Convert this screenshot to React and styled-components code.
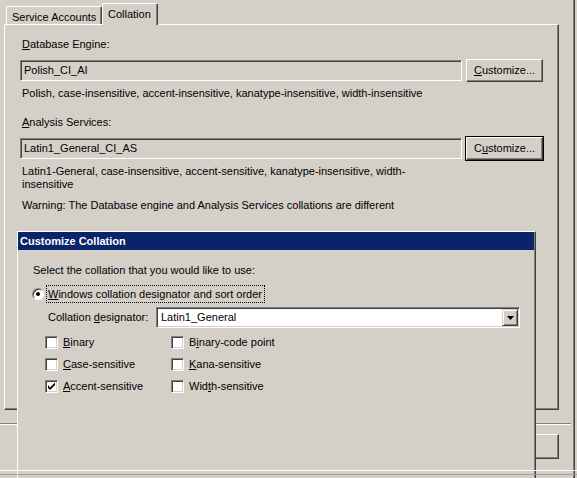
import styled, { createGlobalStyle } from "styled-components";

const GlobalStyle = createGlobalStyle`
  html, body {
    margin: 0;
    padding: 0;
    background: #d4d0c8;
  }
  * {
    box-sizing: border-box;
  }
`;

// Desktop holds the dialog and the floating window on top of it
const Desktop = styled.div`
  position: relative;
  width: 577px;
  height: 478px;
  overflow: hidden;
  background: #d4d0c8;
  color: #000;
  font-family: "Liberation Sans", Arial, sans-serif;
  font-size: 11px;
  line-height: 13px;
`;

const Dialog = styled.div`
  width: 575px;
  height: 100%;
  padding: 3px 0 0 4px;
  border-right: 1px solid #404040;
  box-shadow: inset -1px 0 #808080;
  display: flex;
  flex-direction: column;
`;

const TabStrip = styled.div`
  display: flex;
  align-items: flex-end;
  height: 21px;
  padding-left: 2px;
  position: relative;
  z-index: 1;
`;

const Tab = styled.div`
  width: ${(p) => p.$width}px;
  height: ${(p) => (p.$active ? 22 : 18)}px;
  margin-bottom: ${(p) => (p.$active ? -1 : 0)}px;
  padding: 4px 0 0 5px;
  background: #d4d0c8;
  border-top: 1px solid #fff;
  border-left: 1px solid #fff;
  border-right: 1px solid #404040;
  box-shadow: inset -1px 0 #808080;
  border-radius: 2px 2px 0 0;
  white-space: nowrap;
`;

const Panel = styled.div`
  width: 555px;
  height: 386px;
  border-top: 1px solid #fff;
  border-left: 1px solid #fff;
  border-right: 1px solid #404040;
  border-bottom: 1px solid #404040;
  box-shadow: inset -1px -1px #808080;
  padding: 13px 0 0 15px;
  display: flex;
  flex-direction: column;
`;

const Label = styled.div`
  padding-left: ${(p) => (p.$flush ? 0 : 2)}px;
  margin-top: ${(p) => p.$gap || 0}px;
  white-space: nowrap;
`;

const FieldRow = styled.div`
  display: flex;
  align-items: center;
  gap: 4px;
  margin-top: 8px;
  height: 23px;
`;

const ReadOnlyBox = styled.div`
  width: 442px;
  height: 21px;
  padding: 3px 0 0 3px;
  background: #d4d0c8;
  border-top: 1px solid #808080;
  border-left: 1px solid #808080;
  border-right: 1px solid #fff;
  border-bottom: 1px solid #fff;
  box-shadow: inset 1px 1px #404040;
  white-space: nowrap;
`;

const Button = styled.div`
  width: ${(p) => p.$width || 77}px;
  height: ${(p) => p.$height || 23}px;
  display: flex;
  align-items: center;
  justify-content: center;
  background: #d4d0c8;
  border-top: 1px solid #fff;
  border-left: 1px solid #fff;
  border-right: 1px solid #404040;
  border-bottom: 1px solid #404040;
  box-shadow: inset -1px -1px #808080;
  outline: ${(p) => (p.$default ? "1px solid #000" : "none")};
  white-space: nowrap;
`;

const Separator = styled.div`
  margin: 13px 0 0 -4px;
  width: 571px;
  height: 2px;
  border-top: 1px solid #808080;
  border-bottom: 1px solid #fff;
`;

const ButtonRow = styled.div`
  width: 555px;
  margin-top: 9px;
  display: flex;
  justify-content: flex-end;
`;

// floating "Customize Collation" window
const Window = styled.div`
  position: absolute;
  left: 17px;
  top: 231px;
  width: 519px;
  height: 247px;
  background: #d4d0c8;
  border-top: 1px solid #fff;
  border-left: 1px solid #fff;
  border-right: 1px solid #404040;
  box-shadow: inset -1px 0 #808080;
  padding-right: 1px;
  z-index: 2;
`;

const TitleBar = styled.div`
  height: 18px;
  background: #0a246a;
  color: #fff;
  font-weight: bold;
  padding: 3px 0 0 2px;
  white-space: nowrap;
`;

const WindowBody = styled.div`
  padding: 14px 0 0 15px;
  display: flex;
  flex-direction: column;
`;

const RadioRow = styled.div`
  display: flex;
  align-items: center;
  margin-top: 8px;
  margin-left: -1px;
  height: 18px;
`;

const Radio = styled.div`
  width: 12px;
  height: 12px;
  border-radius: 50%;
  background: #fff;
  border: 1px solid;
  border-color: #808080 #fff #fff #808080;
  box-shadow: inset 1px 1px #404040;
  display: flex;
  align-items: center;
  justify-content: center;
  &::after {
    content: "";
    width: 4px;
    height: 4px;
    border-radius: 50%;
    background: #000;
  }
`;

const FocusLabel = styled.div`
  margin-left: 2px;
  height: 18px;
  padding: 2px 2px 0 1px;
  border: 1px dotted #000;
  white-space: nowrap;
`;

const DesignatorRow = styled.div`
  display: flex;
  align-items: center;
  margin-top: 4px;
  padding-left: 15px;
`;

const DesignatorLabel = styled.div`
  width: 108px;
  white-space: nowrap;
`;

const Combo = styled.div`
  width: 364px;
  height: 21px;
  background: #fff;
  border-top: 1px solid #808080;
  border-left: 1px solid #808080;
  border-right: 1px solid #fff;
  border-bottom: 1px solid #fff;
  box-shadow: inset 1px 1px #404040, inset -1px -1px #d4d0c8;
  display: flex;
  align-items: center;
  justify-content: space-between;
  padding: 1px 1px 1px 4px;
`;

const DropButton = styled.div`
  width: 16px;
  height: 17px;
  background: #d4d0c8;
  border-top: 1px solid #d4d0c8;
  border-left: 1px solid #d4d0c8;
  border-right: 1px solid #404040;
  border-bottom: 1px solid #404040;
  box-shadow: inset 1px 1px #fff, inset -1px -1px #808080;
  display: flex;
  align-items: center;
  justify-content: center;
`;

const CheckGrid = styled.div`
  display: grid;
  grid-template-columns: 126px auto;
  grid-auto-rows: 22px;
  margin-top: 3px;
  padding-left: 12px;
`;

const CheckItem = styled.div`
  display: flex;
  align-items: center;
  gap: 5px;
  white-space: nowrap;
`;

const CheckBox = styled.div`
  width: 13px;
  height: 13px;
  background: #fff;
  border-top: 1px solid #808080;
  border-left: 1px solid #808080;
  border-right: 1px solid #fff;
  border-bottom: 1px solid #fff;
  box-shadow: inset 1px 1px #404040, inset -1px -1px #d4d0c8;
  display: flex;
  align-items: center;
  justify-content: center;
`;

const BottomStrip = styled.div`
  position: absolute;
  left: 0;
  right: 0;
  top: 470px;
  height: 8px;
  border-top: 1px solid #fff;
  z-index: 3;
  &::after {
    content: "";
    display: block;
    margin-top: 3px;
    height: 1px;
    background: #a0a0a0;
  }
`;

const Check = () => (
  <svg width="7" height="7" viewBox="0 0 7 7">
    <path d="M0 2v3l2 2l5-5v-2.5l-5 5z" fill="#000" />
  </svg>
);

const Arrow = () => (
  <svg width="7" height="4" viewBox="0 0 7 4">
    <path d="M0 0h7l-3.5 4z" fill="#000" />
  </svg>
);

const options = [
  [<><u>B</u>inary</>, false],
  [<>B<u>i</u>nary-code point</>, false],
  [<><u>C</u>ase-sensitive</>, false],
  [<><u>K</u>ana-sensitive</>, false],
  [<><u>A</u>ccent-sensitive</>, true],
  [<>Wid<u>t</u>h-sensitive</>, false],
];

export default function App() {
  return (
    <>
      <GlobalStyle />
      <Desktop>
        <Dialog>
          <TabStrip>
            <Tab $width={96}>Service Accounts</Tab>
            <Tab $width={56} $active>
              Collation
            </Tab>
          </TabStrip>
          <Panel>
            <Label>
              <u>D</u>atabase Engine:
            </Label>
            <FieldRow>
              <ReadOnlyBox>Polish_CI_AI</ReadOnlyBox>
              <Button>
                <u>C</u>ustomize...
              </Button>
            </FieldRow>
            <Label $gap={5}>
              Polish, case-insensitive, accent-insensitive, kanatype-insensitive,
              width-insensitive
            </Label>
            <Label $gap={16}>
              <u>A</u>nalysis Services:
            </Label>
            <FieldRow>
              <ReadOnlyBox>Latin1_General_CI_AS</ReadOnlyBox>
              <Button $default>
                C<u>u</u>stomize...
              </Button>
            </FieldRow>
            <Label $gap={5}>
              Latin1-General, case-insensitive, accent-sensitive,
              kanatype-insensitive, width-
              <br />
              insensitive
            </Label>
            <Label $gap={8}>
              Warning: The Database engine and Analysis Services collations are
              different
            </Label>
          </Panel>
          <Separator />
          <ButtonRow>
            <Button $width={75} $height={25}>
              Help
            </Button>
          </ButtonRow>
        </Dialog>

        <Window>
          <TitleBar>Customize Collation</TitleBar>
          <WindowBody>
            <Label $flush>Select the collation that you would like to use:</Label>
            <RadioRow>
              <Radio />
              <FocusLabel>
                <u>W</u>indows collation designator and sort order
              </FocusLabel>
            </RadioRow>
            <DesignatorRow>
              <DesignatorLabel>
                Collation <u>d</u>esignator:
              </DesignatorLabel>
              <Combo>
                <span>Latin1_General</span>
                <DropButton>
                  <Arrow />
                </DropButton>
              </Combo>
            </DesignatorRow>
            <CheckGrid>
              {options.map(([text, checked], i) => (
                <CheckItem key={i}>
                  <CheckBox>{checked && <Check />}</CheckBox>
                  <span>{text}</span>
                </CheckItem>
              ))}
            </CheckGrid>
          </WindowBody>
        </Window>
        <BottomStrip />
      </Desktop>
    </>
  );
}
